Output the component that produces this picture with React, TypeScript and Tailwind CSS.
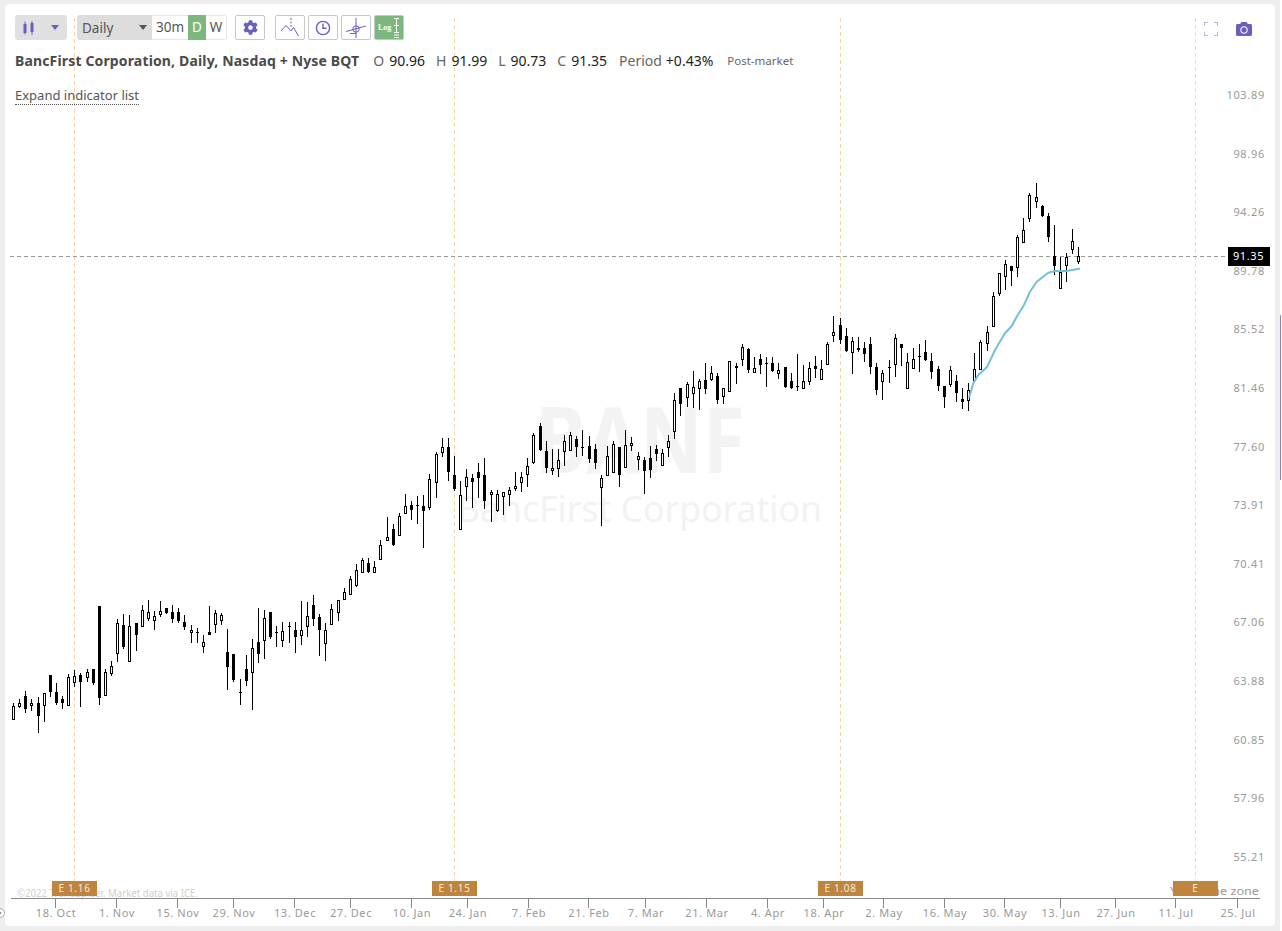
import React from "react";
import { FaCog, FaCamera } from "react-icons/fa";

type C = [number, number, number, number, number, number];
type Seg = { ox: number; oy: number; c: C[] };

const segs: Seg[] = [
  { ox: 0, oy: 590, c: [
    [40,338,388,347,388,0],[58,328,355,340,347,0],[76,302,370,319,356,1],[94,328,364,340,346,0],[115,320,430,340,377,1],[133,310,395,310,346,0],[151,256,322,256,305,1],[169,278,344,307,339,1],[187,318,358,328,338,1],[205,253,344,262,344,0],[223,240,292,259,275,0],[241,250,352,256,275,1],[262,236,277,247,260,0],[280,237,286,238,278,1],[298,48,346,48,323,1],[316,236,314,247,314,0],[334,214,259,229,248,0],[352,88,217,100,190,0],[370,73,176,106,170,1],[388,76,214,109,214,0],[409,100,184,100,136,1],[427,46,109,61,109,0],[445,31,94,67,85,0],[463,64,121,79,91,0],[481,34,82,64,73,0],[499,55,73,55,68,1],[517,46,100,67,86,1],[535,55,100,67,92,1],[553,76,121,97,110,1],[574,106,160,121,127,0],[592,115,160,126,130,1],[610,136,190,157,169,0],[628,49,136,127,134,1],[646,61,130,70,103,0],[664,70,106,76,91,0],[682,118,301,187,232,1],[700,193,277,193,271,1],[721,268,346,306,310,1],[739,196,289,238,272,1],[757,148,361,175,247,0],[775,55,220,157,193,1],[793,61,208,85,151,0],[811,67,148,67,140,1],[829,109,172,126,129,1],
  ]},
  { ox: 140, oy: 580, c: [
    [427,127,202,154,181,0],[448,127,190,138,141,1],[466,127,220,151,172,1],[484,64,196,151,166,0],[502,67,172,109,139,0],[520,46,139,76,118,1],[538,103,229,112,151,1],[556,130,244,151,190,0],[574,73,133,88,133,0],[595,61,124,61,97,0],[613,25,58,37,58,0],
  ]},
  { ox: 280, oy: 420, c: [
    [211,469,526,478,523,0],[229,433,502,451,494,0],[247,415,460,421,457,0],[265,415,460,430,457,1],[283,424,460,442,455,0],[301,360,418,376,418,0],[322,292,364,352,361,0],[340,313,379,328,376,1],[358,280,349,289,346,0],[376,223,280,259,280,0],[394,244,301,256,271,1],[412,229,313,256,258,1],[430,226,385,259,274,1],[448,163,271,178,262,0],[469,97,235,103,187,0],[487,55,112,82,97,0],[505,55,184,82,157,1],[523,109,214,166,208,1],[541,184,328,226,328,0],[559,148,244,172,199,0],[577,163,265,175,187,1],[595,130,235,157,175,1],[613,115,268,166,244,1],[634,211,307,217,223,0],[652,211,277,223,271,0],[670,217,286,217,229,0],[688,202,259,211,223,0],[706,157,214,199,205,0],[724,157,217,172,187,0],[742,115,202,139,163,0],[760,40,133,46,127,0],[781,10,94,19,91,1],[799,64,160,94,145,1],[817,88,166,145,151,0],[835,88,172,121,145,0],
  ]},
  { ox: 560, oy: 310, c: [
    [13,376,469,394,424,0],[31,367,424,376,421,0],[49,379,442,388,412,1],[67,361,439,411,413,1],[88,379,460,409,448,1],[106,403,478,418,460,1],[124,496,649,505,532,0],[142,409,496,439,496,0],[160,394,487,403,487,0],[178,412,532,412,496,1],[196,361,472,406,472,0],[214,382,424,400,406,0],[235,427,481,439,448,0],[253,442,553,451,484,1],[271,409,505,445,481,1],[289,406,454,418,433,1],[307,418,466,430,466,0],[325,376,442,394,412,0],[343,250,388,271,364,0],[361,235,319,235,283,1],[382,217,292,223,262,0],[400,184,295,232,250,0],[418,208,301,214,235,0],[436,160,253,211,238,1],[454,169,214,190,208,0],[472,190,283,199,271,1],[490,235,283,235,259,0],[508,154,244,154,244,0],[529,160,223,169,175,1],[547,103,169,112,148,0],[565,115,190,118,181,1],[583,142,187,175,187,0],[601,133,193,148,166,1],[619,142,232,160,163,1],[637,142,187,160,184,1],[655,160,208,181,190,0],[676,172,235,172,232,1],[694,190,238,214,235,1],[712,133,244,229,231,1],[730,166,235,214,235,0],[748,157,226,175,214,0],[766,139,205,169,178,1],[784,151,208,178,208,0],[802,97,163,103,163,0],[820,19,97,67,76,0],
  ]},
  { ox: 820, oy: 170, c: [
    [61,445,523,466,511,1],[79,475,545,499,544,1],[97,502,613,514,547,0],[115,502,547,535,539,1],[133,517,577,535,553,1],[151,502,613,523,592,1],[169,580,676,592,661,1],[187,601,691,610,634,0],[208,571,640,592,595,1],[226,493,622,505,583,0],[244,523,589,523,535,1],[262,550,655,577,655,0],[280,535,598,568,595,0],[298,523,607,559,561,1],[316,511,574,547,571,1],[334,550,628,574,607,1],[355,589,664,598,649,1],[373,649,715,649,682,1],[391,589,652,601,643,0],[409,616,697,634,670,1],[427,655,718,688,697,1],[445,640,724,661,691,0],[463,550,631,598,631,0],[481,511,601,517,598,0],[502,469,544,487,520,0],[520,367,472,379,469,0],[538,310,379,310,370,0],[556,271,361,283,319,0],[574,289,349,289,304,1],[592,196,322,202,292,0],[610,145,217,181,217,0],[628,70,157,76,145,0],[649,40,115,82,94,0],[667,106,142,109,139,1],[685,130,217,139,202,1],[703,166,316,259,289,1],[721,262,355,307,355,0],[739,250,337,262,286,0],[757,178,253,214,238,0],[775,232,283,259,274,0],
  ]},
];

const ma = [[448,680],[460,640],[475,615],[502,590],[525,540],[555,490],[575,468],[590,440],[612,405],[630,365],[650,335],[685,308],[705,303],[740,303],[778,296]]
  .map(([x, y]) => `${(820 + x / 3).toFixed(1)},${(170 + y / 3).toFixed(1)}`)
  .join(" ");

const yLabels: [string, number][] = [["103.89",95],["98.96",154],["94.26",212],["89.78",271],["85.52",329],["81.46",388],["77.60",447],["73.91",505],["70.41",564],["67.06",622],["63.88",681],["60.85",740],["57.96",798],["55.21",857]];
const xLabels: [string, number][] = [["18. Oct",55],["1. Nov",116],["15. Nov",177],["29. Nov",233],["13. Dec",294],["27. Dec",350],["10. Jan",411],["24. Jan",467],["7. Feb",528],["21. Feb",588],["7. Mar",645],["21. Mar",706],["4. Apr",767],["18. Apr",823],["2. May",883],["16. May",944],["30. May",1004],["13. Jun",1060],["27. Jun",1115],["11. Jul",1175],["25. Jul",1237]];
const earnings: [string, number][] = [["E 1.16",52],["E 1.15",432],["E 1.08",818],["E",1173]];
const font = "'Noto Sans', 'Open Sans', sans-serif";
const purple = "#6a5fc1";

function Candle({ x, hi, lo, top, bot, f }: { x: number; hi: number; lo: number; top: number; bot: number; f: number }) {
  const cx = Math.floor(x) + 0.5;
  const h = Math.max(Math.round(bot) - Math.round(top), 1);
  return (
    <g shapeRendering="crispEdges">
      <line x1={cx} x2={cx} y1={Math.round(hi)} y2={Math.round(lo)} stroke="#000" strokeWidth={1} />
      {f ? (
        <rect x={cx - 1.5} y={Math.round(top)} width={3} height={h} fill="#000" />
      ) : (
        <rect x={cx - 1} y={Math.round(top) + 0.5} width={2} height={h} fill="#fff" stroke="#000" strokeWidth={1} />
      )}
    </g>
  );
}

function Chart() {
  return (
    <svg className="absolute inset-0" width={1270} height={922} viewBox="5 4 1270 922" style={{ fontFamily: font }}>
      <text x={535} y={473} fontSize={91} fontWeight={700} fill="#f3f3f3" textLength={210} lengthAdjust="spacingAndGlyphs">BANF</text>
      <text x={457} y={522} fontSize={36} fill="#f2f2f2" textLength={365} lengthAdjust="spacingAndGlyphs">BancFirst Corporation</text>

      {[74.5, 454.5, 840.5].map((x) => (
        <line key={x} x1={x} x2={x} y1={18} y2={881} stroke="#fad2a0" strokeDasharray="4 3" shapeRendering="crispEdges" />
      ))}
      <line x1={1195.5} x2={1195.5} y1={18} y2={881} stroke="#efdabd" strokeDasharray="4 3" shapeRendering="crispEdges" />
      <line x1={10} x2={1228} y1={256.5} y2={256.5} stroke="#9a9a9a" strokeDasharray="4 3" shapeRendering="crispEdges" />

      {segs.map((s, i) =>
        s.c.map(([zx, hi, lo, top, bot, f], j) => (
          <Candle key={`${i}-${j}`} x={s.ox + zx / 3} hi={s.oy + hi / 3} lo={s.oy + lo / 3} top={s.oy + top / 3} bot={s.oy + bot / 3} f={f} />
        ))
      )}
      <polyline points={ma} fill="none" stroke="#74bfdc" strokeWidth={2} strokeLinejoin="round" strokeLinecap="round" />

      {yLabels.map(([t, y]) => (
        <text key={t} x={1265} y={y + 4} textAnchor="end" fontSize={11} fill="#999" letterSpacing={0.7}>{t}</text>
      ))}

      <text x={17} y={897} fontSize={10} fill="#cfcfcf" textLength={181} lengthAdjust="spacingAndGlyphs">©2022 TrendSpider. Market data via ICE.</text>
      <text x={1170} y={895} fontSize={11} fill="#999" textLength={89} lengthAdjust="spacingAndGlyphs">Your time zone</text>

      {earnings.map(([t, x]) => (
        <g key={x}>
          <rect x={x} y={881} width={45} height={15} fill="#bf853f" />
          <text x={x + 22.5} y={892} textAnchor="middle" fontSize={10} fill="#f7ead8" letterSpacing={0.7}>{t}</text>
        </g>
      ))}

      <line x1={11} x2={1260} y1={898.5} y2={898.5} stroke="#888" shapeRendering="crispEdges" />
      {xLabels.map(([t, x]) => (
        <g key={t}>
          <line x1={x + 0.5} x2={x + 0.5} y1={898} y2={908} stroke="#888" shapeRendering="crispEdges" />
          <text x={x + 1} y={917} textAnchor="middle" fontSize={11} fill="#999" letterSpacing={0.6}>{t}</text>
        </g>
      ))}

      <rect x={1228} y={247} width={42} height={19} fill="#000" />
      <text x={1248.5} y={260} textAnchor="middle" fontSize={11} fill="#fff" letterSpacing={0.6}>91.35</text>
    </svg>
  );
}

const iconBtn = "flex h-[25px] w-[30px] items-center justify-center rounded-[2px] border border-[#c8c8c8] bg-white";

function Toolbar() {
  return (
    <div className="relative flex h-[25px] items-stretch">
      <div className="flex w-[52px] items-center justify-between rounded-[3px] bg-[#e0e0e0] pl-[8px] pr-[8px]">
        <svg width="12" height="14" viewBox="0 0 12 14" fill={purple}>
          <rect x="0.5" y="3" width="3" height="9" />
          <rect x="1.5" y="0.5" width="1" height="13" />
          <rect x="7.5" y="2" width="3" height="9" />
          <rect x="8.5" y="0" width="1" height="14" />
        </svg>
        <span className="h-0 w-0 border-x-[4px] border-t-[5px] border-x-transparent border-t-[#6a5fc1]" />
      </div>
      <div className="ml-[10px] flex overflow-hidden rounded-[3px] text-[13.5px] text-[#555]">
        <div className="flex w-[75px] items-center justify-between bg-[#dddddd] pl-[5px] pr-[5px]">
          <span className="mt-[1px]">Daily</span>
          <span className="h-0 w-0 border-x-[4px] border-t-[5px] border-x-transparent border-t-[#555]" />
        </div>
        <div className="flex w-[36px] items-center justify-center border-y border-[#e6e6e6] bg-white">30m</div>
        <div className="flex w-[18px] items-center justify-center bg-[#7cb87e] text-white">D</div>
        <div className="flex w-[21px] items-center justify-center border-y border-r border-[#e6e6e6] bg-white">W</div>
      </div>
      <div className={`${iconBtn} ml-[8px]`}>
        <FaCog size={15} color={purple} />
      </div>
      <div className={`${iconBtn} ml-[10px]`}>
        <svg width="20" height="21" viewBox="0 0 20 21" fill="none" stroke={purple} strokeWidth="1">
          <path d="M1 14 L6 8.5 L11 14 L13.5 10.5 L18.5 19" />
          <path d="M11 1 V3 M11 4.5 V6.5 M11 8 V10" />
        </svg>
      </div>
      <div className={`${iconBtn} ml-[3px]`}>
        <svg width="16" height="16" viewBox="0 0 16 16" fill="none" stroke={purple} strokeWidth="1.4">
          <circle cx="8" cy="8" r="6.6" />
          <path d="M8 3.5 V8.3 H11.5" />
        </svg>
      </div>
      <div className={`${iconBtn} ml-[3px]`}>
        <svg width="22" height="20" viewBox="0 0 22 20" fill="none" stroke={purple} strokeWidth="1">
          <circle cx="11" cy="11" r="3.2" />
          <path d="M11 0 V20 M1 13.5 L21 8" />
          <path d="M5 15.5 H11" />
        </svg>
      </div>
      <div className="ml-[3px] flex h-[25px] w-[30px] items-center justify-between rounded-[2px] border border-[#c8c8c8] bg-[#7cb87e] pl-[3px] pr-[4px]">
        <span className="text-[8px] font-bold leading-none text-white" style={{ fontFamily: "'Liberation Serif', serif" }}>Log</span>
        <svg width="5" height="21" viewBox="0 0 5 21" stroke="#fff" strokeWidth="1">
          <path d="M0 1.5 H5 M2.5 2 V15 M0 8.5 H5 M0 15.5 H5 M0 18 H5 M0 20.5 H5" />
        </svg>
      </div>
      <div className="ml-auto mr-[23px] flex items-center gap-[18px] pt-[3px]">
        <svg width="14" height="14" viewBox="0 0 14 14" fill="none" stroke="#b9b5e2" strokeWidth="1" shapeRendering="crispEdges">
          <path d="M0.5 4 V0.5 H4 M10 0.5 H13.5 V4 M13.5 10 V13.5 H10 M4 13.5 H0.5 V10" />
        </svg>
        <FaCamera size={16} color={purple} />
      </div>
    </div>
  );
}

function Kv({ k, v, cls, gap }: { k: string; v: string; cls: string; gap: string }) {
  return (
    <span className={`${cls} ${gap} flex`}>
      <span className="text-[#666]">{k}</span>
      <span className="text-[#222]">{v}</span>
    </span>
  );
}

function Legend() {
  return (
    <div className="relative mt-[12px] flex h-[18px] items-center text-[14px] leading-none">
      <span className="font-bold tracking-[0.15px] text-[#4a4a4a]">BancFirst Corporation, Daily, Nasdaq + Nyse BQT</span>
      <Kv k="O" v="90.96" cls="ml-[14px]" gap="gap-[5px]" />
      <Kv k="H" v="91.99" cls="ml-[11px]" gap="gap-[5px]" />
      <Kv k="L" v="90.73" cls="ml-[11px]" gap="gap-[5px]" />
      <Kv k="C" v="91.35" cls="ml-[11px]" gap="gap-[5px]" />
      <Kv k="Period" v="+0.43%" cls="ml-[12px]" gap="gap-[4px]" />
      <span className="ml-[14px] text-[11.5px] text-[#666]">Post-market</span>
    </div>
  );
}

export default function App() {
  return (
    <div className="relative flex h-[931px] w-[1282px] overflow-hidden bg-[#eeeeee]" style={{ fontFamily: font }}>
      <div className="relative mb-[5px] ml-[5px] mt-[4px] w-[1270px] rounded-[4px] bg-white pl-[10px] pt-[11px]">
        <Chart />
        <Toolbar />
        <Legend />
        <div className="relative mt-[17px] flex">
          <span className="border-b border-dotted border-[#555] text-[13px] leading-[17px] text-[#555]">Expand indicator list</span>
        </div>
      </div>
      <div className="ml-[5px] flex-1 bg-white pt-[315px]">
        <div className="h-[165px] w-[1px] bg-[#8b84cc]" />
      </div>
      <div className="absolute left-[-5px] top-[908px] flex h-[10px] w-[10px] items-center justify-center rounded-full border border-[#aaa] bg-white">
        <span className="ml-[1px] h-0 w-0 border-y-[2px] border-l-[3px] border-y-transparent border-l-[#888]" />
      </div>
    </div>
  );
}
